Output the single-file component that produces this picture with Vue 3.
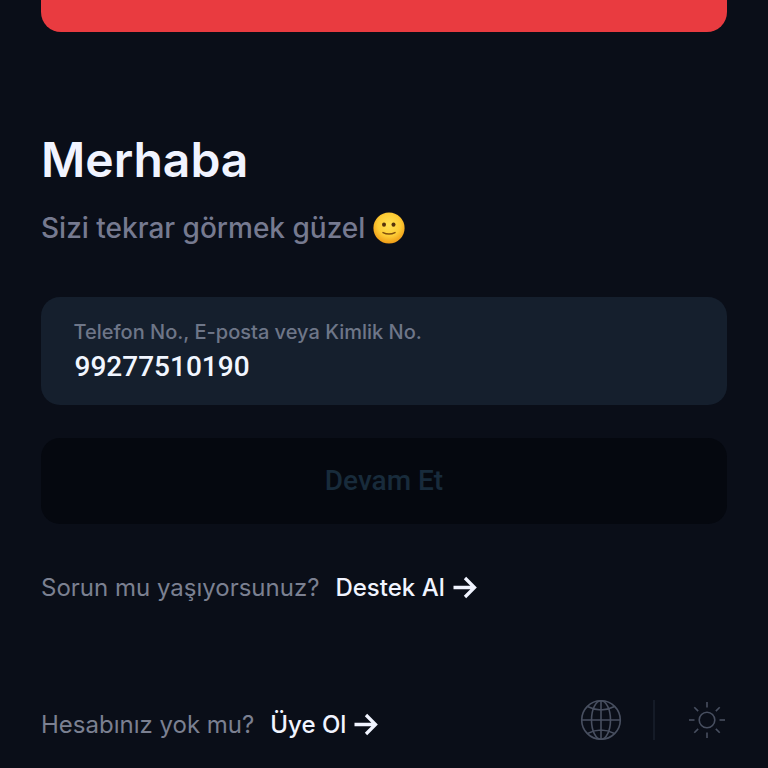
<script setup>
const links = [
  { key: 'support', question: 'Sorun mu yaşıyorsunuz?', action: 'Destek Al' },
  { key: 'signup', question: 'Hesabınız yok mu?', action: 'Üye Ol' },
]
const rays = [0, 45, 90, 135, 180, 225, 270, 315]
</script>

<template>
  <main class="page">
    <div class="banner"></div>
    <h1 class="title">Merhaba</h1>
    <p class="subtitle">
      <span class="subtitle-text">Sizi tekrar görmek güzel</span>
      <svg class="smile" viewBox="0 0 32 32">
        <defs>
          <radialGradient id="face" cx="0.5" cy="0.4" r="0.6">
            <stop offset="0" stop-color="#ffe052" />
            <stop offset="0.6" stop-color="#fdcc35" />
            <stop offset="1" stop-color="#ef9b16" />
          </radialGradient>
        </defs>
        <circle cx="16" cy="16" r="15.6" fill="url(#face)" />
        <ellipse cx="11" cy="12.6" rx="2" ry="2.2" fill="#56330c" />
        <ellipse cx="20.5" cy="12.6" rx="2" ry="2.2" fill="#56330c" />
        <path d="M10 20.6Q16 23.6 22 20.6" fill="none" stroke="#80500d" stroke-width="1.5" stroke-linecap="round" />
      </svg>
    </p>

    <label class="field">
      <span class="field-label">Telefon No., E-posta veya Kimlik No.</span>
      <span class="field-value">99277510190</span>
    </label>
    <button class="submit" disabled><span>Devam Et</span></button>

    <div v-for="link in links" :key="link.key" class="row" :class="link.key">
      <span class="question">{{ link.question }}</span>
      <span class="action">{{ link.action }}</span>
      <svg class="arrow" viewBox="0 0 24 24">
        <path d="M0.5 11.5H21.5M12 2L21.5 11.5L12 21" />
      </svg>
      <div v-if="link.key === 'signup'" class="tools">
        <svg class="globe" viewBox="0 0 42 42">
          <circle cx="21" cy="21" r="19.3" />
          <ellipse cx="21" cy="21" rx="9.5" ry="19.3" />
          <path d="M21 1.7V40.3M1.7 21H40.3M7.5 7.5Q21 14.5 34.5 7.5M7.5 34.5Q21 27.5 34.5 34.5" />
        </svg>
        <span class="divider"></span>
        <svg class="sun" viewBox="0 0 38 38">
          <circle cx="19" cy="19" r="7.8" />
          <path v-for="a in rays" :key="a" d="M19 1V6.5" :transform="`rotate(${a} 19 19)`" />
        </svg>
      </div>
    </div>
  </main>
</template>

<style>
body {
  background: #0a0e18;
}
</style>

<style scoped>
.page {
  box-sizing: border-box;
  height: 768px;
  padding: 0 41px;
  overflow: hidden;
  display: flex;
  flex-direction: column;
  background: #0a0e18;
  font-family: Inter, sans-serif;
  white-space: nowrap;
}
.banner {
  flex: none;
  height: 32px;
  border-radius: 0 0 20px 20px;
  background: #e93b40;
}
.title {
  margin: 98px 0 0;
  font-size: 48px;
  line-height: 60px;
  font-weight: 600;
  color: #f1f4ff;
}
.subtitle {
  margin: 18px 0 0;
  height: 40px;
  display: flex;
  align-items: center;
  gap: 8px;
  font-size: 28px;
  line-height: 40px;
  font-weight: 500;
  color: #767a90;
}
.smile {
  width: 32px;
  height: 32px;
}
.field {
  box-sizing: border-box;
  flex: none;
  height: 108px;
  margin: 48.5px 0 0;
  padding: 23.5px 33px 0 32.5px;
  border-radius: 19px;
  background: #151f2d;
  display: flex;
  flex-direction: column;
}
.field-label {
  font-size: 20px;
  line-height: 24px;
  font-weight: 500;
  color: #6e7688;
}
.field-value {
  margin: 6px 0 0 1px;
  font-family: Roboto, sans-serif;
  font-size: 28px;
  line-height: 34px;
  font-weight: 500;
  color: #f1f6ff;
}
.submit {
  flex: none;
  height: 86px;
  margin: 33.5px 0 0;
  padding: 0;
  border: 0;
  border-radius: 19px;
  background: #05080f;
  font-family: Roboto, sans-serif;
  font-size: 28px;
  line-height: 34px;
  font-weight: 500;
  color: #182b3b;
}
.row {
  display: flex;
  align-items: center;
  height: 40px;
  font-size: 24px;
  line-height: 40px;
}
.support {
  margin-top: 44px;
}
.signup {
  margin-top: 97px;
}
.question {
  color: #7b8091;
}
.action {
  margin-left: 16px;
  font-weight: 500;
  color: #f1f4ff;
}
.arrow {
  width: 24px;
  height: 24px;
  margin-left: 8px;
  fill: none;
  stroke: #f1f4ff;
  stroke-width: 3.3;
}
.tools {
  margin: -10px 1px 0 auto;
  display: flex;
  align-items: center;
}
.globe {
  width: 42px;
  height: 42px;
  fill: none;
  stroke: #484f60;
  stroke-width: 1.6;
}
.divider {
  width: 2px;
  height: 40px;
  margin: 0 33px 0 31px;
  background: #151b27;
}
.sun {
  width: 38px;
  height: 38px;
  fill: none;
  stroke: #484f60;
  stroke-width: 1.6;
}
</style>
